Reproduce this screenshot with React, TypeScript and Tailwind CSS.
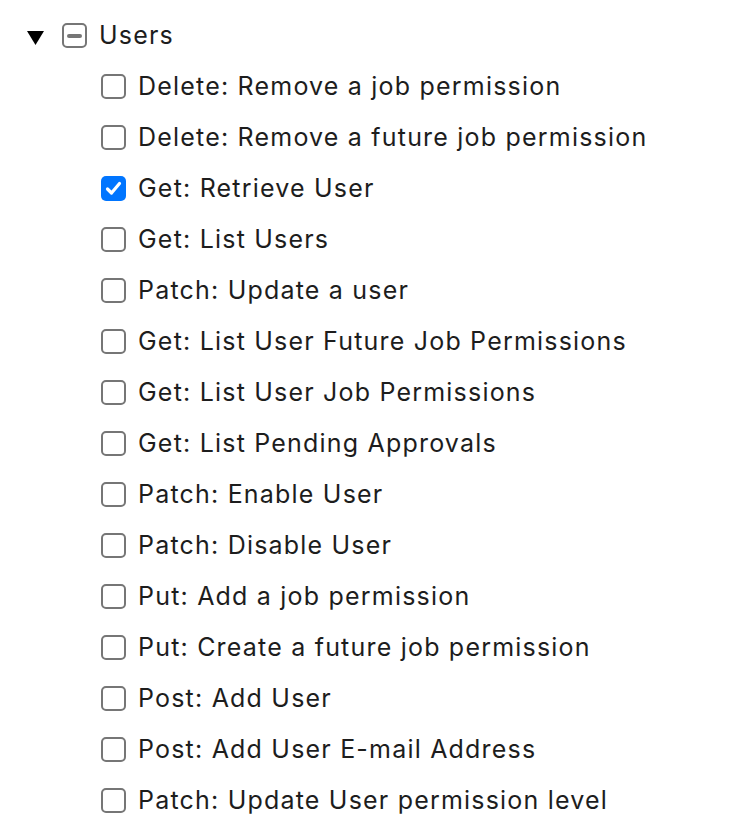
import React from "react";

const items = [
  { label: "Delete: Remove a job permission", checked: false },
  { label: "Delete: Remove a future job permission", checked: false },
  { label: "Get: Retrieve User", checked: true },
  { label: "Get: List Users", checked: false },
  { label: "Patch: Update a user", checked: false },
  { label: "Get: List User Future Job Permissions", checked: false },
  { label: "Get: List User Job Permissions", checked: false },
  { label: "Get: List Pending Approvals", checked: false },
  { label: "Patch: Enable User", checked: false },
  { label: "Patch: Disable User", checked: false },
  { label: "Put: Add a job permission", checked: false },
  { label: "Put: Create a future job permission", checked: false },
  { label: "Post: Add User", checked: false },
  { label: "Post: Add User E-mail Address", checked: false },
  { label: "Patch: Update User permission level", checked: false },
];

function Box({ checked, mixed }: { checked?: boolean; mixed?: boolean }) {
  if (checked) {
    return (
      <span className="flex h-[25px] w-[25px] shrink-0 items-center justify-center rounded-[5px] bg-[#0075ff]">
        <svg width="17" height="17" viewBox="0 0 17 17" fill="none">
          <path d="M2.5 9l4 4 8-9.5" stroke="white" strokeWidth="3.2" strokeLinecap="round" strokeLinejoin="round" />
        </svg>
      </span>
    );
  }
  return (
    <span className="flex h-[25px] w-[25px] shrink-0 items-center justify-center rounded-[5px] border-2 border-[#767676] bg-white">
      {mixed && <span className="h-[4px] w-[15px] rounded-full bg-[#767676]" />}
    </span>
  );
}

export default function App() {
  return (
    <div className="min-h-screen bg-white pt-[10px] font-['Inter',sans-serif] text-[25px] tracking-[1.2px] text-[#1d1d1d]">
      <div className="flex h-[51px] items-center pl-[27px]">
        <svg width="17" height="14" viewBox="0 0 17 14" className="mt-[4px]">
          <path d="M0 0h17L8.5 14z" fill="#000" />
        </svg>
        <span className="ml-[18px]">
          <Box mixed />
        </span>
        <span className="ml-[12px]">Users</span>
      </div>
      <ul className="flex flex-col pl-[101px]">
        {items.map((it) => (
          <li key={it.label} className="flex h-[51px] items-center gap-[12px]">
            <Box checked={it.checked} />
            <span>{it.label}</span>
          </li>
        ))}
      </ul>
    </div>
  );
}
